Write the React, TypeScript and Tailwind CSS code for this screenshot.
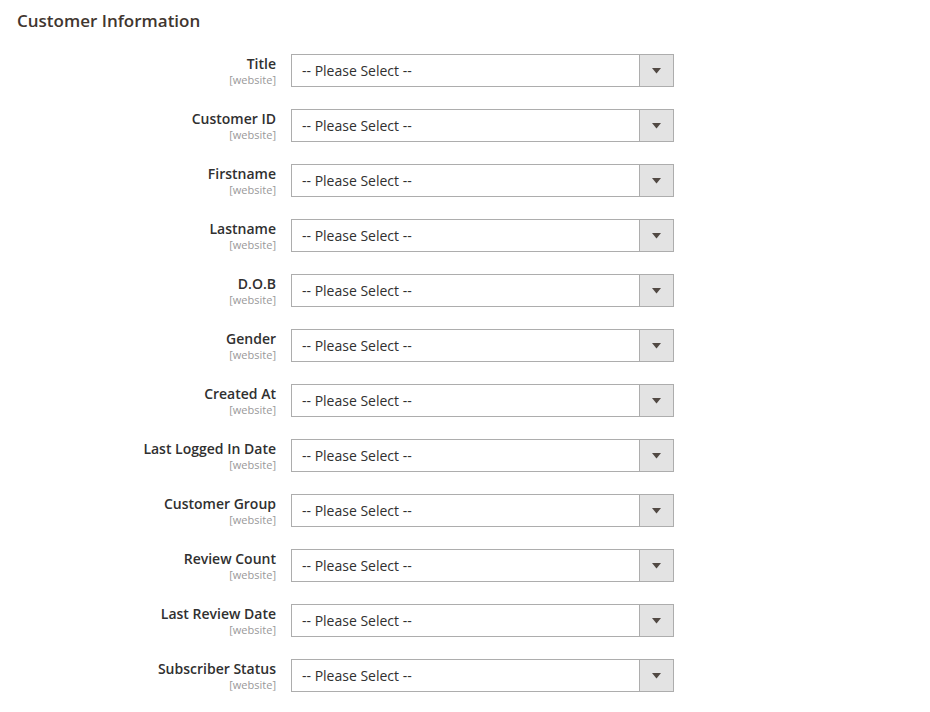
import React from "react";

const fields = [
  "Title",
  "Customer ID",
  "Firstname",
  "Lastname",
  "D.O.B",
  "Gender",
  "Created At",
  "Last Logged In Date",
  "Customer Group",
  "Review Count",
  "Last Review Date",
  "Subscriber Status",
];

function Row({ label }: { label: string }) {
  return (
    <div className="flex items-start h-[55px]">
      <div className="w-[277px] pr-[1px] pt-[1px] flex flex-col items-end">
        <div className="text-[14px] leading-[18px] font-semibold text-[#303030]">{label}</div>
        <div className="text-[11px] leading-[13px] text-[#999999]">[website]</div>
      </div>
      <div className="ml-[14px] w-[383px] h-[33px] flex border border-[#adadad] bg-white">
        <div className="flex-1 flex items-center pl-[10px] text-[14px] text-[#303030]">-- Please Select --</div>
        <div className="w-[34px] h-full border-l border-[#adadad] bg-[#e3e3e3] flex items-center justify-center">
          <svg width="9" height="6" viewBox="0 0 9 6">
            <path d="M0 0 H9 L4.5 5.5 Z" fill="#514943" />
          </svg>
        </div>
      </div>
    </div>
  );
}

export default function App() {
  return (
    <div className="w-[930px] h-[712px] bg-white overflow-hidden" style={{ fontFamily: '"Open Sans", sans-serif' }}>
      <div className="pl-[17px] pt-[9px] text-[17px] leading-[23px] font-semibold text-[#41362f]">Customer Information</div>
      <div className="mt-[22px]">
        {fields.map((f) => (
          <Row key={f} label={f} />
        ))}
      </div>
    </div>
  );
}
